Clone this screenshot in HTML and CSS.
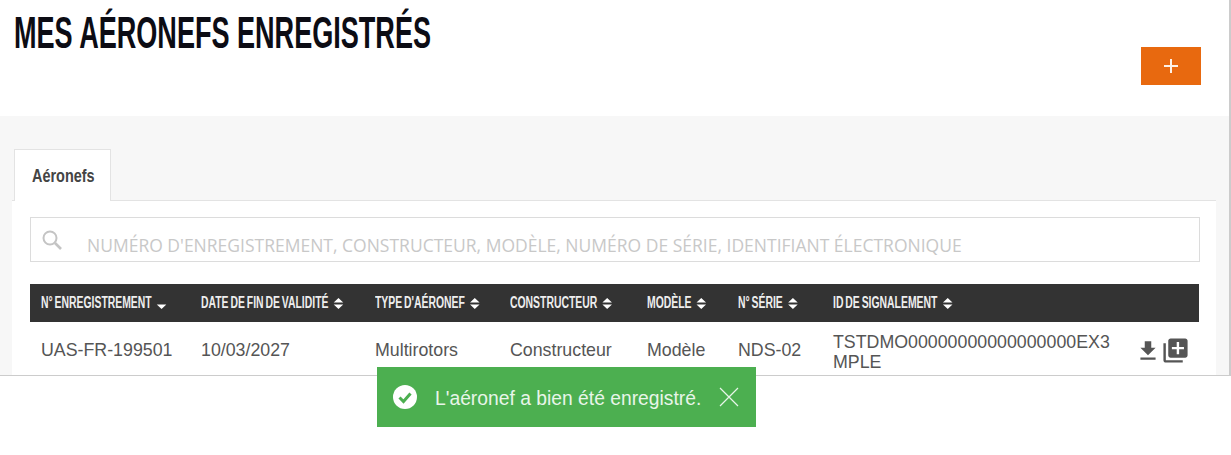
FILE: index.html
```html
<!DOCTYPE html>
<html lang="fr">
  <head>
    <meta charset="utf-8">
    <title>Mes aéronefs enregistrés</title>
    <link rel="stylesheet" href="styles.css">
  </head>
  <body>
    <div class="frame">
      <header class="page-head">
        <h1 class="title">MES AÉRONEFS ENREGISTRÉS</h1>
        <button class="add-btn" aria-label="Ajouter">
          <svg width="16" height="16" viewBox="0 0 16 16"><path d="M8 1v14M1 8h14" stroke="#fdf1e6" stroke-width="2"/></svg>
        </button>
      </header>

      <section class="content">
        <div class="tabs">
          <div class="tab"><span class="tab-label">Aéronefs</span></div>
        </div>
        <div class="panel">
          <div class="search">
            <svg class="search-icon" width="22" height="22" viewBox="0 0 22 22"><circle cx="9" cy="9" r="6.5" fill="none" stroke="#c4c4c4" stroke-width="2"/><path d="M14 14l6 6" stroke="#c4c4c4" stroke-width="2.6"/></svg>
            <span class="placeholder">NUMÉRO D'ENREGISTREMENT, CONSTRUCTEUR, MODÈLE, NUMÉRO DE SÉRIE, IDENTIFIANT ÉLECTRONIQUE</span>
          </div>

          <table class="drones">
            <colgroup>
              <col class="c1"><col class="c2"><col class="c3"><col class="c4"><col class="c5"><col class="c6"><col class="c7"><col class="c8">
            </colgroup>
            <thead>
              <tr>
                <th><span class="th-in">N° ENREGISTREMENT <svg class="sort" viewBox="0 0 18 12"><path d="M1 7h16l-8 5z" fill="#fff"/></svg></span></th>
                <th><span class="th-in">DATE DE FIN DE VALIDITÉ <svg class="sort" viewBox="0 0 18 12"><path d="M1 5l8-5 8 5zM1 7h16l-8 5z" fill="#fff"/></svg></span></th>
                <th><span class="th-in">TYPE D'AÉRONEF <svg class="sort" viewBox="0 0 18 12"><path d="M1 5l8-5 8 5zM1 7h16l-8 5z" fill="#fff"/></svg></span></th>
                <th><span class="th-in">CONSTRUCTEUR <svg class="sort" viewBox="0 0 18 12"><path d="M1 5l8-5 8 5zM1 7h16l-8 5z" fill="#fff"/></svg></span></th>
                <th><span class="th-in">MODÈLE <svg class="sort" viewBox="0 0 18 12"><path d="M1 5l8-5 8 5zM1 7h16l-8 5z" fill="#fff"/></svg></span></th>
                <th><span class="th-in">N° SÉRIE <svg class="sort" viewBox="0 0 18 12"><path d="M1 5l8-5 8 5zM1 7h16l-8 5z" fill="#fff"/></svg></span></th>
                <th><span class="th-in">ID DE SIGNALEMENT <svg class="sort" viewBox="0 0 18 12"><path d="M1 5l8-5 8 5zM1 7h16l-8 5z" fill="#fff"/></svg></span></th>
                <th></th>
              </tr>
            </thead>
            <tbody>
              <tr>
                <td>UAS-FR-199501</td>
                <td>10/03/2027</td>
                <td>Multirotors</td>
                <td>Constructeur</td>
                <td>Modèle</td>
                <td>NDS-02</td>
                <td class="id-cell">TSTDMO00000000000000000EX3MPLE</td>
                <td class="actions">
                  <div class="action-row">
                    <svg class="dl" width="26" height="26" viewBox="0 0 24 24"><path d="M19 9h-4V3H9v6H5l7 7 7-7zM5 18v2h14v-2H5z"/></svg>
                    <svg class="lib" width="29" height="29" viewBox="0 0 24 24"><path d="M4 6H2v14c0 1.1.9 2 2 2h14v-2H4V6zm16-4H8c-1.1 0-2 .9-2 2v12c0 1.1.9 2 2 2h12c1.1 0 2-.9 2-2V4c0-1.1-.9-2-2-2zm-1 9h-4v4h-2v-4H9V9h4V5h2v4h4v2z"/></svg>
                  </div>
                </td>
              </tr>
            </tbody>
          </table>
        </div>
      </section>
    </div>

    <div class="toast">
      <svg width="24" height="24" viewBox="0 0 24 24"><circle cx="12" cy="12" r="12" fill="#fff"/><path d="M6.5 12.5l4 4 7-8" fill="none" stroke="#4caf50" stroke-width="3"/></svg>
      <span class="toast-text">L'aéronef a bien été enregistré.</span>
      <svg width="20" height="20" viewBox="0 0 20 20"><path d="M1 1l18 18M19 1L1 19" stroke="#e8f5e9" stroke-width="1.2"/></svg>
    </div>
  </body>
</html>
```

FILE: styles.css
```css
html, body {
  margin: 0;
  height: 455px;
  overflow: hidden;
  background: #fff;
}

body {
  font-family: "Liberation Sans", Arial, sans-serif;
  color: #555;
}

.frame {
  width: 1229px;
  height: 375px;
  border-right: 2px solid #ccc;
  border-bottom: 1px solid #ccc;
  overflow: hidden;
}

.page-head {
  display: flex;
  justify-content: space-between;
  height: 116px;
  padding: 0 28px 0 14px;
}

.title {
  width: 420px;
  margin: 9px 0 0;
  font-size: 44px;
  line-height: 48px;
  font-weight: 700;
  color: #0c0c14;
  white-space: nowrap;
  transform: scaleX(.615);
  transform-origin: left;
}

.add-btn {
  width: 60px;
  height: 38px;
  margin-top: 47px;
  padding: 0;
  border: 0;
  background: #e8690f;
}

.add-btn svg {
  display: block;
  margin: 0 auto;
}

.content {
  height: 259px;
  padding: 33px 13px 0 12px;
  background: #f7f7f7;
}

.tabs {
  display: flex;
  height: 51px;
  padding-left: 2px;
  border-bottom: 1px solid #e3e3e3;
}

.tab {
  box-sizing: border-box;
  width: 97px;
  height: 52px;
  border: 1px solid #e3e3e3;
  border-bottom: 0;
  background: #fff;
  font-size: 19px;
  font-weight: 700;
  line-height: 51px;
  color: #444;
}

.tab-label {
  display: inline-block;
  margin-left: 17px;
  transform: scaleX(.76);
  transform-origin: left;
}

.panel {
  height: 175px;
  padding: 16px 16px 0 18px;
  background: #fff;
}

.search {
  display: flex;
  align-items: center;
  height: 43px;
  border: 1px solid #dcdcdc;
  background: #fff;
}

.search-icon {
  margin-left: 10px;
}

.placeholder {
  margin: 10px 0 0 24px;
  font-family: "Open Sans", sans-serif;
  font-size: 17.5px;
  color: #c8c8c8;
  white-space: nowrap;
}

.drones {
  width: 1169px;
  margin-top: 22px;
  border-collapse: collapse;
  table-layout: fixed;
}

.c1 { width: 160px; }
.c2 { width: 174px; }
.c3 { width: 135px; }
.c4 { width: 137px; }
.c5 { width: 91px; }
.c6 { width: 95px; }
.c7 { width: 305px; }
.c8 { width: 72px; }

.drones th {
  height: 38px;
  padding: 0 0 0 11px;
  background: #333;
  text-align: left;
  overflow: hidden;
}

.th-in {
  display: inline-flex;
  align-items: center;
  gap: 7px;
  font-size: 16px;
  font-weight: 700;
  word-spacing: -1.5px;
  color: #eee;
  white-space: nowrap;
  transform: scaleX(.65);
  transform-origin: left;
}

.sort {
  width: 17px;
  height: 11px;
  flex: none;
}

.drones td {
  padding: 18px 11px 0;
  font-size: 17.8px;
  line-height: 20px;
  vertical-align: top;
}

.drones .id-cell {
  padding-top: 10px;
  word-break: break-all;
}

.drones .actions {
  padding: 16px 0 0 8px;
}

.action-row {
  display: flex;
  align-items: flex-start;
}

.action-row svg {
  flex: none;
  fill: #555;
}

.action-row .lib {
  margin-top: -2px;
}

.toast {
  position: absolute;
  left: 377px;
  top: 367px;
  display: flex;
  align-items: center;
  box-sizing: border-box;
  width: 379px;
  height: 60px;
  padding-left: 16px;
  background: #4caf50;
}

.toast-text {
  width: 266px;
  margin: 3px 18px 0 18px;
  font-size: 19.3px;
  color: #e8f5e9;
  white-space: nowrap;
}
```
